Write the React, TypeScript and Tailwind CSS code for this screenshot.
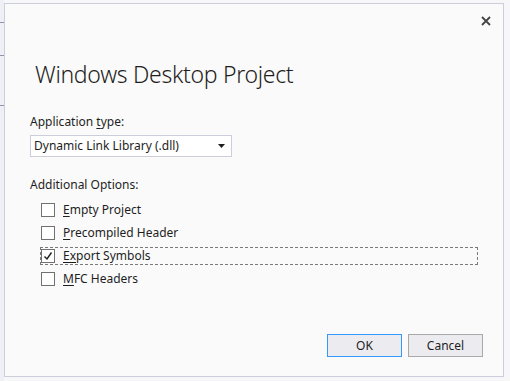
import { useState } from 'react'

const OPTIONS = [
  { key: 'E', rest: 'mpty Project', checked: false },
  { key: 'P', rest: 'recompiled Header', checked: false },
  { key: 'Ex', rest: 'port Symbols', checked: true, focused: true },
  { key: 'M', rest: 'FC Headers', checked: false },
]

function Checkbox({ checked }: { checked: boolean }) {
  return (
    <div className="w-[14px] h-[14px] border border-[#717171] bg-white flex items-center justify-center">
      {checked && (
        <svg width="10" height="10" viewBox="0 0 10 10">
          <path d="M1.5 5.5 L4 8 L8.5 1.5" fill="none" stroke="#1e1e1e" strokeWidth="1.4" />
        </svg>
      )}
    </div>
  )
}

export default function App() {
  const [opts, setOpts] = useState(OPTIONS)

  return (
    <div
      className="w-[510px] h-[381px] bg-[#f7f7f9] flex text-[#1e1e1e] overflow-hidden"
      style={{ fontFamily: '"Noto Sans", "Open Sans", sans-serif' }}
    >
      {/* 背后窗口的一角 */}
      <div className="w-[4px] flex flex-col bg-[#eef0f6]">
        <div className="h-[22px]" />
        <div className="h-[33px] border-t border-[#8f95a8]" />
        <div className="h-[50px] border-t border-[#8f95a8]" />
        <div className="flex-1 border-t border-[#8f95a8]" />
      </div>

      <div className="mt-[3px] w-[500px] h-[374px] bg-[#fafafa] border border-[#cccedb] flex flex-col">
        {/* 关闭 */}
        <div className="flex justify-end pr-[12px] pt-[12px] h-[26px]">
          <svg width="10" height="10" viewBox="0 0 10 10">
            <path d="M1 1 L9 9 M9 1 L1 9" stroke="#444" strokeWidth="1.8" />
          </svg>
        </div>

        <h1 className="pl-[30px] mt-[29px] text-[23px] font-light leading-[30px] tracking-[-0.3px] text-[#1e1e1e]">
          Windows Desktop Project
        </h1>

        <div className="pl-[25px] mt-[25px] text-[12px] leading-[16px]">
          <div>
            Application <span className="underline underline-offset-2">t</span>ype:
          </div>
          <div className="mt-[5px] w-[202px] h-[22px] border border-[#cccedb] bg-white flex items-center pl-[3px] pr-[6px] justify-between">
            <span>Dynamic Link Library (.dll)</span>
            <svg width="7" height="4" viewBox="0 0 7 4">
              <path d="M0 0 H7 L3.5 4 Z" fill="#1e1e1e" />
            </svg>
          </div>

          <div className="mt-[20px]">Additional Options:</div>

          <div className="mt-[8px] flex flex-col gap-[5px] pl-[11px]">
            {opts.map((o, i) => (
              <div
                key={i}
                onClick={() =>
                  setOpts((p) => p.map((x, j) => (j === i ? { ...x, checked: !x.checked } : x)))
                }
                className={
                  'h-[18px] flex items-center gap-[8px] w-[438px] -ml-[1px] border ' +
                  (o.focused ? 'border-dashed border-[#7a7a7a]' : 'border-transparent')
                }
              >
                <Checkbox checked={o.checked} />
                <span>
                  <span className="underline underline-offset-2">{o.key}</span>
                  {o.rest}
                </span>
              </div>
            ))}
          </div>
        </div>

        <div className="mt-auto mb-[19px] flex justify-end gap-[6px] pr-[20px] text-[12px]">
          <button className="w-[75px] h-[23px] border border-[#3399ff] bg-[#ececf0]">OK</button>
          <button className="w-[75px] h-[23px] border border-[#a9a9a9] bg-[#ececf0]">Cancel</button>
        </div>
      </div>
    </div>
  )
}
